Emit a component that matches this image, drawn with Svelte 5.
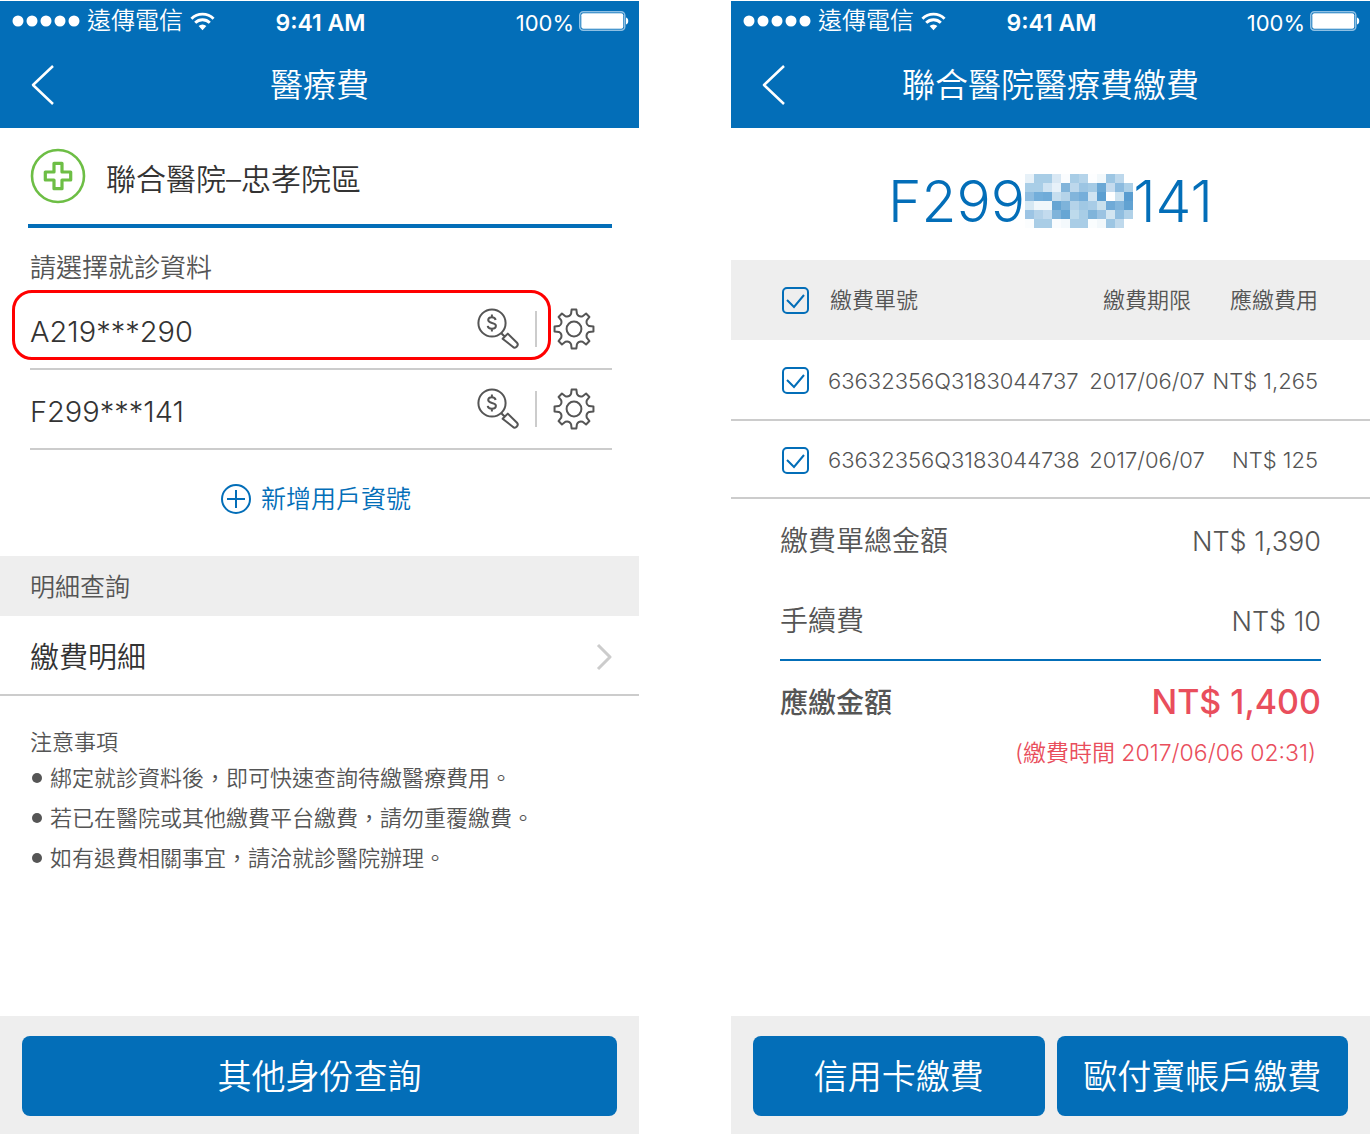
<script>
  const members = [
    { id: 'A219***290', highlighted: true },
    { id: 'F299***141', highlighted: false }
  ];

  const notes = [
    '綁定就診資料後，即可快速查詢待繳醫療費用。',
    '若已在醫院或其他繳費平台繳費，請勿重覆繳費。',
    '如有退費相關事宜，請洽就診醫院辦理。'
  ];

  let bills = $state([
    { no: '63632356Q3183044737', due: '2017/06/07', amount: 'NT$ 1,265', checked: true },
    { no: '63632356Q3183044738', due: '2017/06/07', amount: 'NT$ 125', checked: true }
  ]);

  const allChecked = $derived(bills.every((b) => b.checked));

  function toggleAll(event) {
    for (const bill of bills) bill.checked = event.currentTarget.checked;
  }

  // Mosaic cells that mask the middle digits of the account number.
  const mosaic = [
    ['#e7f1f8', '#a8cde6', '#a8cde6', '#d9e8f4', '#fafcfe', '#a8cde6', '#b5d4ea', '#fdfeff', '#f2f8fb', '#9dc6e3', '#bdd8ec', '#ffffff'],
    ['#a9cee7', '#a9cee7', '#cfe3f2', '#e7f1f9', '#82b4da', '#bdd8ec', '#9cc5e3', '#a5cbe5', '#6ba8d5', '#c5dbee', '#8cbbdf', '#add0e8'],
    ['#8fbde0', '#73aeda', '#6fabd8', '#c6deef', '#b5d3e9', '#82b5db', '#75aeda', '#d0e4f2', '#5c9fd1', '#ffffff', '#cce2f0', '#5a9dd0'],
    ['#d6e8f3', '#f0f7fb', '#f0f7fb', '#66a5d3', '#7eb3da', '#b4d3e9', '#a0c8e4', '#a8cce6', '#c9e0ed', '#6faad7', '#81b5dc', '#61a2d2'],
    ['#9cc4e4', '#b4d2e9', '#c3dbee', '#7fb3da', '#67a6d4', '#bddaec', '#a8cde6', '#80b4da', '#9bc3e2', '#d2e5f1', '#90bee0', '#b0d1e8'],
    ['#fbfdfe', '#a9cde6', '#a9cde6', '#fafcfe', '#f4f9fc', '#a9cde6', '#a9cde6', '#fafdfe', '#f2f8fb', '#9dc6e3', '#bfd9ec', '#ffffff']
  ];
  const cells = mosaic.flatMap((row, y) => row.map((fill, x) => ({ x, y, fill })));

  // Outline of an eight-toothed gear centred on (21, 21).
  function gearPath() {
    const polar = (r, deg) => {
      const a = (deg * Math.PI) / 180;
      return `${(21 + r * Math.cos(a)).toFixed(2)} ${(21 + r * Math.sin(a)).toFixed(2)}`;
    };
    let d = '';
    for (let i = 0; i < 8; i++) {
      const c = i * 45 - 90;
      d += `${i === 0 ? 'M' : 'L'}${polar(15.4, c - 11)}L${polar(19.6, c - 7)}L${polar(19.6, c + 7)}L${polar(15.4, c + 11)}`;
      d += `Q${polar(12.6, c + 22.5)} ${polar(15.4, c + 34)}`;
    }
    return d + 'Z';
  }
  const gear = gearPath();
</script>

{#snippet statusBar()}
  <div class="status">
    <div class="carrier">
      <svg class="signal" viewBox="0 0 68 12" aria-hidden="true">
        {#each [6, 20, 34, 48, 62] as cx}
          <circle {cx} cy="6" r="5.5" fill="#fff" />
        {/each}
      </svg>
      <span>遠傳電信</span>
      <svg class="wifi" viewBox="0 0 26 19" aria-hidden="true">
        <path d="M1.5 6.6a16.3 16.3 0 0 1 23 0" />
        <path d="M5.4 10.8a10.8 10.8 0 0 1 15.2 0" />
        <path class="solid" d="M13 18.5l-4-4.2a5.6 5.6 0 0 1 8 0z" />
      </svg>
    </div>
    <div class="clock">9:41 AM</div>
    <div class="power">
      <span>100%</span>
      <svg class="battery" viewBox="0 0 50 20" aria-hidden="true">
        <rect x="0.75" y="0.75" width="45" height="18.5" rx="3.5" fill="none" stroke="#8fc0e4" stroke-width="1.5" />
        <rect x="2.3" y="2.3" width="42" height="15.4" rx="2" fill="#fff" />
        <path d="M47 6.5c3 .6 3 6.4 0 7z" fill="#fff" />
      </svg>
    </div>
  </div>
{/snippet}

{#snippet titleBar(title)}
  <div class="titlebar">
    <button class="back" aria-label="返回">
      <svg viewBox="0 0 24 42" aria-hidden="true"><path d="M22 2L2 21l20 19" /></svg>
    </button>
    <h1>{title}</h1>
  </div>
{/snippet}

<main>
  <section class="phone">
    <header>
      {@render statusBar()}
      {@render titleBar('醫療費')}
    </header>

    <div class="hospital">
      <svg class="cross" viewBox="0 0 56 56" aria-hidden="true">
        <circle cx="28" cy="28" r="26" stroke-width="2.6" />
        <path stroke-width="3.2" d="M24 15.3h8v8.7h8.7v8H32v8.7h-8V32h-8.7v-8H24z" />
      </svg>
      <h2>聯合醫院–忠孝院區</h2>
    </div>

    <div class="picker">
      <p class="hint">請選擇就診資料</p>
      <ul class="members">
        {#each members as member}
          <li class:highlighted={member.highlighted}>
            <span class="member-id">{member.id}</span>
            <button class="icon" aria-label="查詢費用">
              <svg viewBox="0 0 42 42" aria-hidden="true">
                <circle cx="15" cy="15" r="13.6" />
                <path d="M24.3 25.2l3 3M25.600 30.800l5.200-5.200 9.200 9.200c1.500 1.600.600 3-.400 4-1 1-2.400 1.400-3.800 0z" />
                <path d="M18.600 12c-.300-1.900-1.800-2.700-3.800-2.700-2.100 0-3.600 1-3.600 2.800 0 3.900 7.700 1.700 7.700 5.700 0 1.800-1.700 2.900-4 2.900-2.300 0-3.900-.9-4.200-2.900M14.900 6.600v2.700M14.900 20.700v2.700" />
              </svg>
            </button>
            <span class="divider"></span>
            <button class="icon gear" aria-label="設定">
              <svg viewBox="0 0 42 42" aria-hidden="true">
                <path d={gear} />
                <circle cx="21" cy="21" r="7.4" />
              </svg>
            </button>
          </li>
        {/each}
      </ul>
      <button class="add">
        <svg viewBox="0 0 30 30" aria-hidden="true">
          <circle cx="15" cy="15" r="14" />
          <path d="M15 6v18M6 15h18" />
        </svg>
        新增用戶資號
      </button>
    </div>

    <h3 class="band">明細查詢</h3>
    <a class="link-row" href="#details">
      <span>繳費明細</span>
      <svg viewBox="0 0 16 28" aria-hidden="true"><path d="M2 2l12 12L2 26" /></svg>
    </a>

    <div class="notes">
      <p>注意事項</p>
      <ul>
        {#each notes as note}
          <li>{note}</li>
        {/each}
      </ul>
    </div>

    <footer>
      <button class="primary">其他身份查詢</button>
    </footer>
  </section>

  <section class="phone">
    <header>
      {@render statusBar()}
      {@render titleBar('聯合醫院醫療費繳費')}
    </header>

    <div class="account">
      <span>F299</span>
      <svg viewBox="0 0 12 6" shape-rendering="crispEdges" aria-hidden="true">
        {#each cells as cell}
          <rect x={cell.x} y={cell.y} width="1" height="1" fill={cell.fill} />
        {/each}
      </svg>
      <span>141</span>
    </div>

    <table>
      <thead>
        <tr>
          <th class="tick"><input type="checkbox" aria-label="全選" checked={allChecked} onchange={toggleAll} /></th>
          <th class="no">繳費單號</th>
          <th class="due">繳費期限</th>
          <th class="amount">應繳費用</th>
        </tr>
      </thead>
      <tbody>
        {#each bills as bill}
          <tr>
            <td class="tick"><input type="checkbox" aria-label={bill.no} bind:checked={bill.checked} /></td>
            <td class="no">{bill.no}</td>
            <td class="due">{bill.due}</td>
            <td class="amount">{bill.amount}</td>
          </tr>
        {/each}
      </tbody>
    </table>

    <dl class="summary">
      <div><dt>繳費單總金額</dt><dd>NT$ 1,390</dd></div>
      <div><dt>手續費</dt><dd>NT$ 10</dd></div>
      <div class="total"><dt>應繳金額</dt><dd>NT$ 1,400</dd></div>
    </dl>
    <p class="paid-at">(繳費時間 2017/06/06 02:31)</p>

    <footer>
      <button class="primary">信用卡繳費</button>
      <button class="primary">歐付寶帳戶繳費</button>
    </footer>
  </section>
</main>

<style>
  :global(body) {
    background: #fff;
  }

  main {
    display: grid;
    grid-template-columns: 1fr 1fr;
    gap: 92px;
    min-height: 100vh;
    box-sizing: border-box;
    padding: 1px 1px 2px 0;
    color: #555;
    font-family: Inter, 'Noto Sans CJK TC', sans-serif;
    font-weight: 350;
  }

  .phone {
    display: flex;
    flex-direction: column;
    min-width: 0;
  }

  h1, h2, h3, p, ul, dl, dd {
    margin: 0;
    padding: 0;
    font-weight: inherit;
  }

  ul {
    list-style: none;
  }

  button {
    padding: 0;
    border: 0;
    background: none;
    color: inherit;
    font: inherit;
    cursor: pointer;
  }

  svg {
    display: block;
    flex: none;
    fill: none;
    stroke-linejoin: round;
  }

  header {
    background: #036eb8;
    color: #fff;
  }

  .status {
    display: grid;
    grid-template-columns: 1fr auto 1fr;
    align-items: center;
    height: 40px;
    padding: 0 10px 0 12px;
    font-size: 24px;
    line-height: 40px;
  }

  .carrier, .power {
    display: flex;
    align-items: center;
    gap: 7px;
  }

  .power {
    justify-content: flex-end;
    gap: 5px;
    font-weight: 400;
    font-size: 22px;
  }

  .power span, .clock {
    padding-top: 4px;
    line-height: 36px;
  }

  .clock {
    font-weight: 600;
    font-size: 23px;
  }

  .signal {
    width: 68px;
    height: 12px;
  }

  .wifi {
    width: 25px;
    height: 19px;
    stroke: #fff;
    stroke-width: 3;
  }

  .wifi .solid {
    fill: #fff;
    stroke: none;
  }

  .battery {
    width: 50px;
    height: 20px;
  }

  .titlebar {
    display: grid;
    grid-template-columns: 1fr auto 1fr;
    align-items: center;
    height: 87px;
    padding: 0 31px;
  }

  .back {
    width: 24px;
    height: 42px;
  }

  .back svg {
    width: 24px;
    height: 42px;
    stroke: #fff;
    stroke-width: 2.5;
  }

  h1 {
    font-size: 33px;
    line-height: 48px;
  }

  .hospital {
    display: flex;
    align-items: center;
    gap: 20px;
    height: 96px;
    margin: 0 27px 0 28px;
    padding-left: 2px;
    border-bottom: 4px solid #036eb8;
    color: #333;
  }

  .cross {
    width: 56px;
    height: 56px;
    stroke: #6dbe45;
  }

  h2 {
    padding-top: 6px;
    font-size: 30px;
    line-height: 44px;
  }

  .picker {
    display: flex;
    flex-direction: column;
    padding: 20px 27px 0 30px;
  }

  .hint {
    margin-bottom: 2px;
    font-size: 26px;
    line-height: 40px;
  }

  .members li {
    position: relative;
    display: flex;
    align-items: center;
    height: 78px;
    border-bottom: 2px solid #ccc;
    color: #333;
  }

  /* Callout ring drawn over the row and its lookup icon */
  .highlighted::before {
    content: '';
    position: absolute;
    inset: 0 61px 8px -18px;
    border: 3px solid #f00;
    border-radius: 20px;
    pointer-events: none;
  }

  .member-id {
    flex: 1;
    padding-top: 6px;
    font-size: 29px;
    line-height: 40px;
  }

  .icon svg {
    width: 42px;
    height: 42px;
    stroke: #555;
    stroke-width: 2;
  }

  .divider {
    width: 2px;
    height: 36px;
    margin: 0 16px;
    background: #ccc;
  }

  .gear {
    margin-right: 17px;
  }

  .add {
    display: flex;
    align-items: center;
    align-self: center;
    gap: 10px;
    margin: 29px 10px 37px 0;
    color: #036eb8;
    font-size: 25px;
    line-height: 40px;
  }

  .add svg {
    width: 30px;
    height: 30px;
    stroke: #036eb8;
    stroke-width: 2;
  }

  .band {
    padding: 2px 0 0 30px;
    background: #eee;
    font-size: 25px;
    line-height: 58px;
  }

  .link-row {
    display: flex;
    align-items: center;
    justify-content: space-between;
    height: 78px;
    padding: 0 27px 0 30px;
    border-bottom: 2px solid #ccc;
    color: #333;
    font-size: 29px;
    text-decoration: none;
  }

  .link-row svg {
    width: 16px;
    height: 28px;
    padding-top: 4px;
    stroke: #ccc;
    stroke-width: 3;
  }

  .notes {
    padding: 30px 30px 0;
    font-size: 22px;
    line-height: 40px;
  }

  .notes p {
    line-height: 32px;
  }

  .notes li {
    display: flex;
    align-items: center;
    gap: 8px;
  }

  .notes li::before {
    content: '';
    width: 10px;
    height: 10px;
    margin-left: 2px;
    border-radius: 50%;
    background: #555;
  }

  footer {
    display: flex;
    gap: 12px;
    margin-top: auto;
    padding: 20px 22px 18px;
    background: #eee;
  }

  .primary {
    flex: 1;
    height: 80px;
    padding-bottom: 4px;
    border-radius: 8px;
    background: #036eb8;
    color: #fff;
    font-size: 34px;
  }

  .account {
    display: flex;
    align-items: center;
    justify-content: center;
    height: 118px;
    padding-top: 14px;
    color: #036eb8;
    font-size: 57px;
  }

  .account svg {
    width: 108px;
    height: 54px;
  }

  table {
    width: 100%;
    border-collapse: collapse;
    font-size: 22px;
    line-height: 32px;
  }

  th, td {
    box-sizing: border-box;
    height: 80px;
    padding: 0;
    font-weight: inherit;
    white-space: nowrap;
  }

  thead {
    background: #eee;
  }

  td {
    padding-top: 2px;
    border-bottom: 2px solid #ccc;
  }

  tbody tr:last-child td {
    height: 78px;
  }

  .tick {
    width: 97px;
    padding-left: 51px;
    text-align: left;
  }

  .no {
    text-align: left;
  }

  th.no {
    padding-left: 2px;
  }

  .due {
    width: 116px;
    text-align: center;
  }

  .amount {
    width: 165px;
    padding-right: 52px;
    text-align: right;
  }

  input {
    display: block;
    width: 27px;
    height: 27px;
    margin: 0;
    border: 2px solid #036eb8;
    border-radius: 5px;
    appearance: none;
  }

  input:checked {
    background: center / 23px 23px no-repeat
      url("data:image/svg+xml,%3Csvg xmlns='http://www.w3.org/2000/svg' viewBox='0 0 23 23' fill='none' stroke='%23036eb8' stroke-width='2'%3E%3Cpath d='M3 11l7 7L20 6'/%3E%3C/svg%3E");
  }

  .summary {
    padding: 0 49px;
    font-size: 28px;
  }

  .summary > div {
    display: flex;
    align-items: center;
    justify-content: space-between;
    height: 80px;
  }

  .summary dd {
    padding-top: 5px;
    font-size: 27px;
  }

  .summary .total {
    border-top: 2px solid #036eb8;
    font-weight: 500;
  }

  .summary .total dd {
    padding-top: 0;
    color: #e94e5c;
    font-size: 34px;
  }

  .paid-at {
    padding-right: 54px;
    color: #e94e5c;
    font-size: 23px;
    line-height: 24px;
    text-align: right;
  }

  @media (max-width: 1200px) {
    main {
      grid-template-columns: 1fr;
      gap: 40px;
    }
  }
</style>
